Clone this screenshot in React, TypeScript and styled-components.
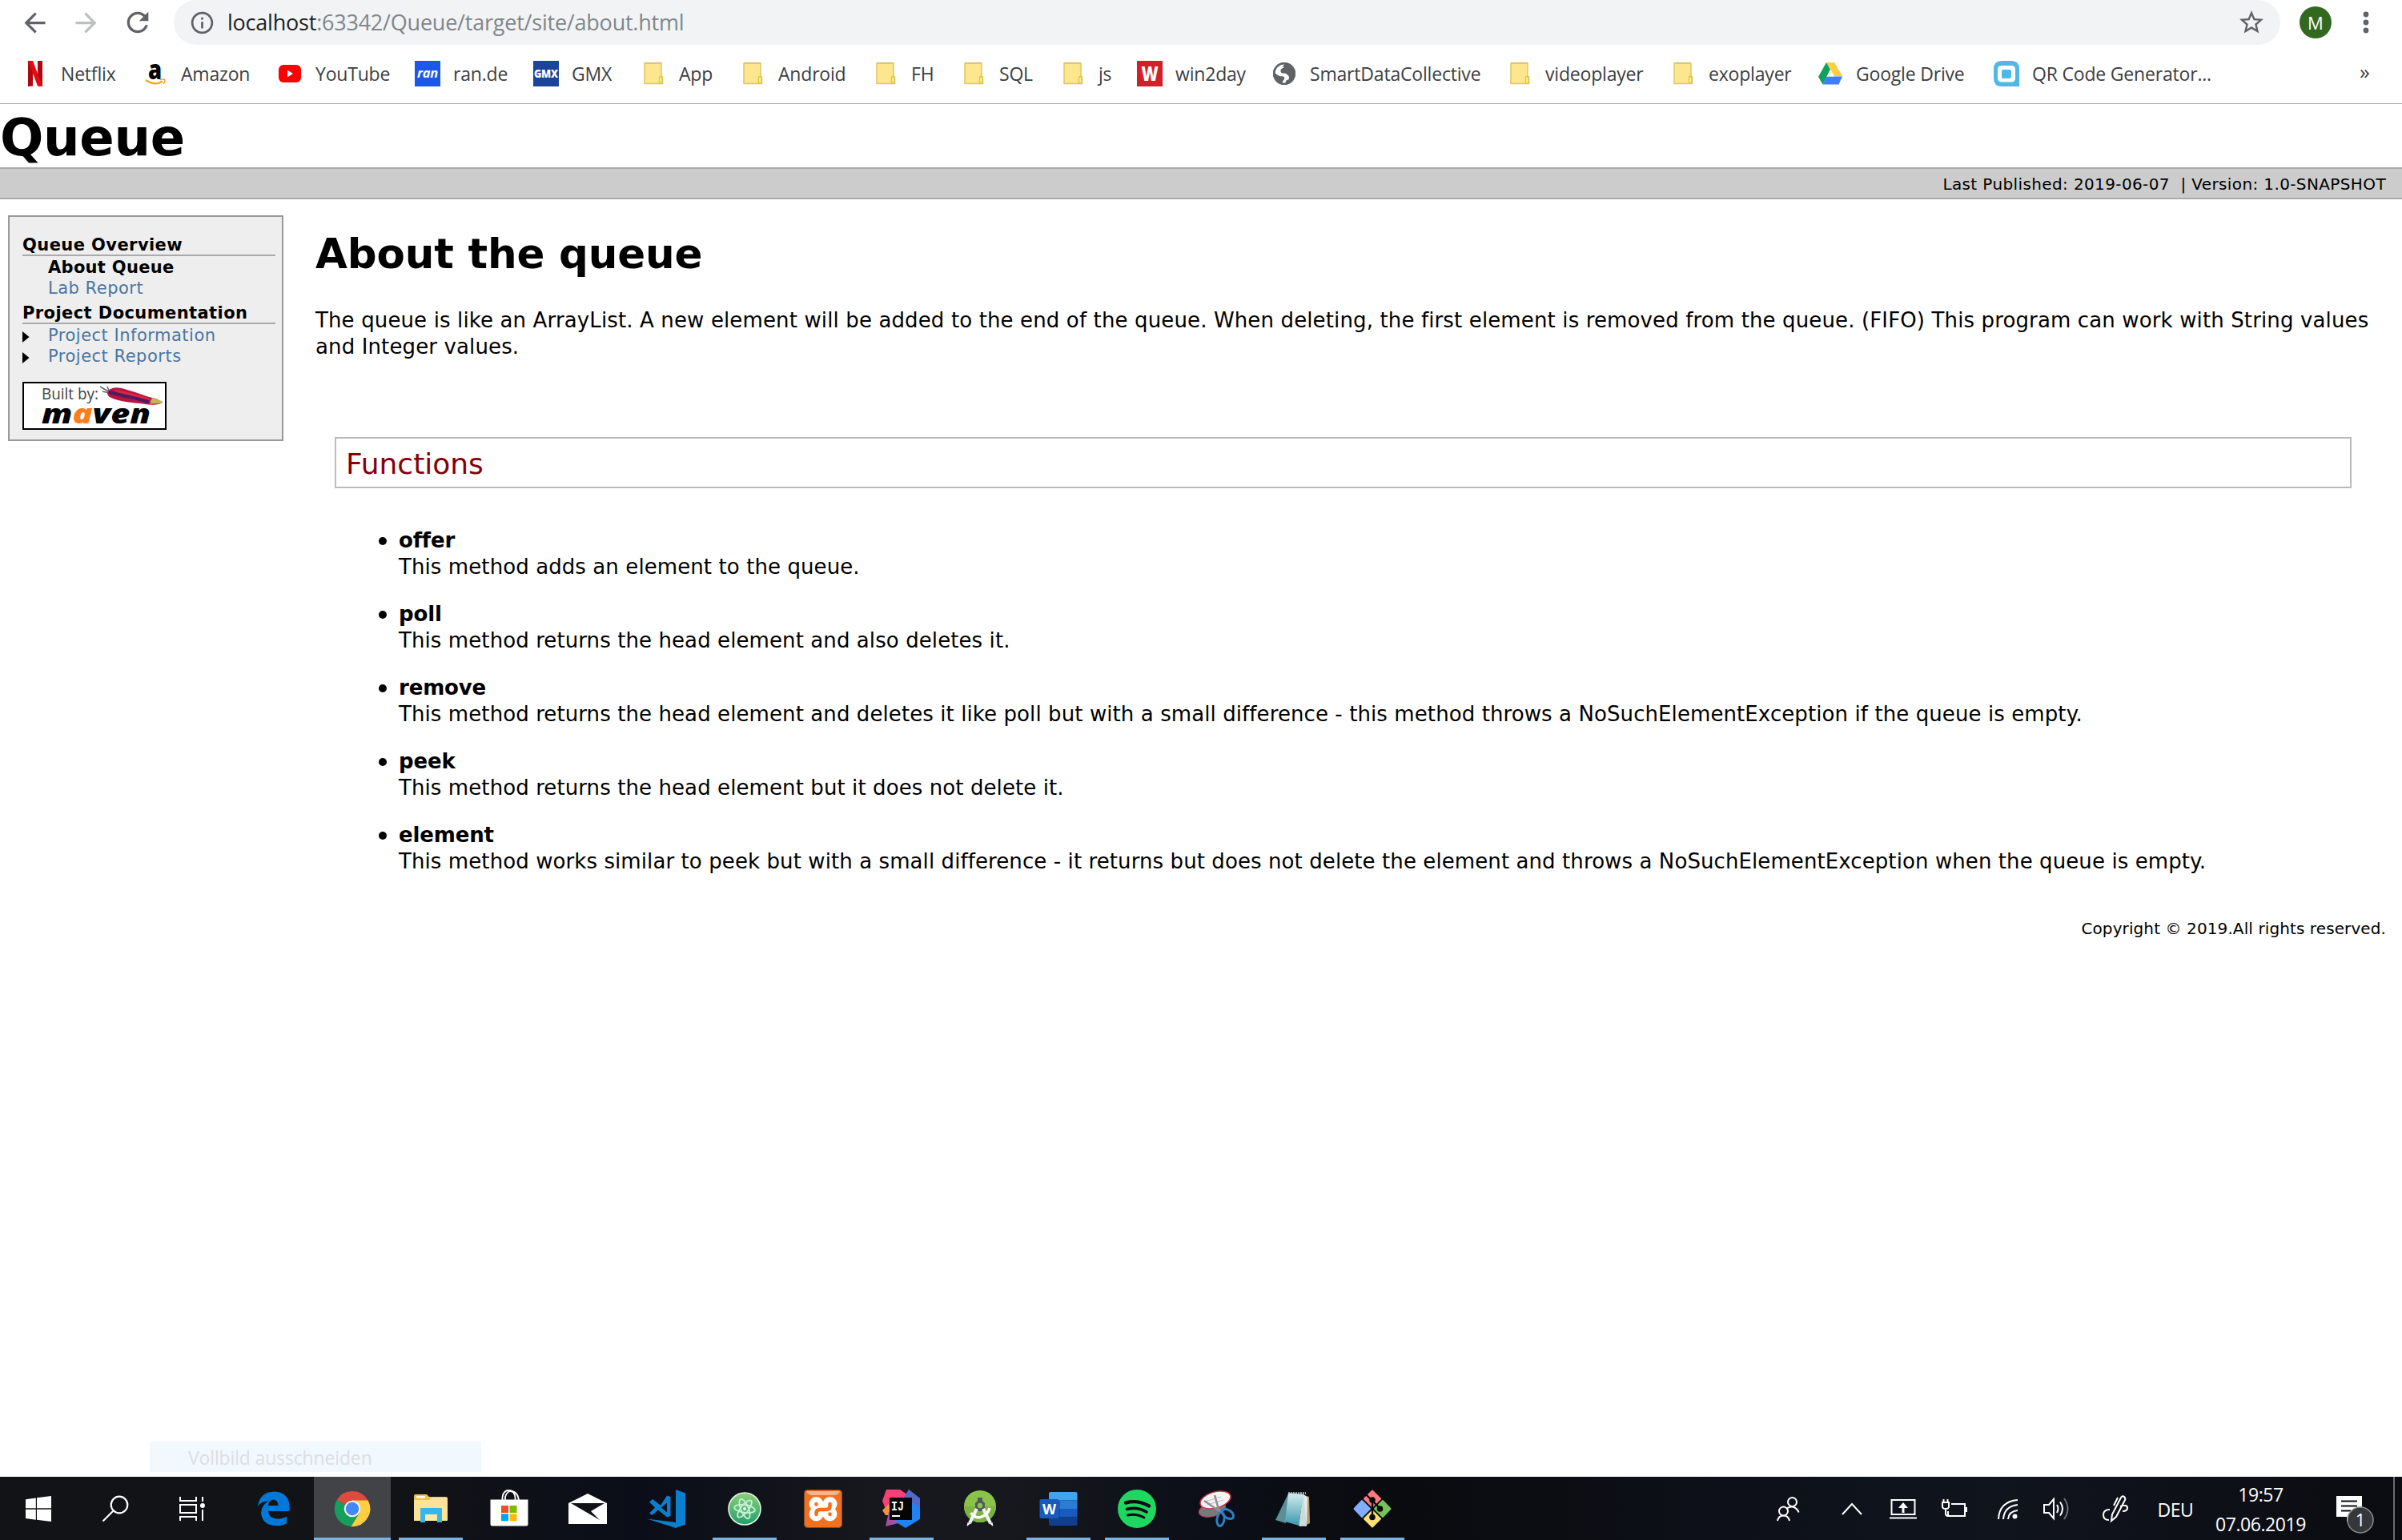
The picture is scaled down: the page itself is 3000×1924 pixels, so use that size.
import React from "react";
import styled, { createGlobalStyle } from "styled-components";
import { MdArrowBack, MdArrowForward, MdRefresh, MdStarBorder, MdInfoOutline } from "react-icons/md";

const Global = createGlobalStyle`
  body { margin: 0; background: #fff; overflow: hidden; }
  *, *::before, *::after { box-sizing: border-box; }
  svg { display: block; flex: none; overflow: visible; }
`;

const uiFont = "'Open Sans', 'Segoe UI', sans-serif";
const siteFont = "'DejaVu Sans', Verdana, sans-serif";

const Screen = styled.div`
  width: 3000px;
  height: 1924px;
  display: flex;
  flex-direction: column;
  background: #fff;
  position: relative;
`;

/* ---------- browser chrome ---------- */

const Toolbar = styled.div`
  height: 56px;
  display: flex;
  align-items: center;
  padding-left: 24px;
  color: #5f6368;
`;

const NavButton = styled.div<{ $disabled?: boolean; $gap: number }>`
  margin-right: ${(p) => p.$gap}px;
  color: ${(p) => (p.$disabled ? "#bdbfc1" : "#5f6368")};
`;

const AddressBar = styled.div`
  width: 2631px;
  height: 56px;
  display: flex;
  align-items: center;
  padding: 0 18px 0 19px;
  border-radius: 28px;
  background: #f1f3f4;
`;

const Url = styled.div`
  flex: 1;
  margin-left: 15px;
  font: 27px/56px ${uiFont};
  letter-spacing: -0.22px;
  color: #80868b;
  white-space: nowrap;
  span { color: #202124; }
`;

const Avatar = styled.div`
  width: 40px;
  height: 40px;
  margin: 0 36px 0 24px;
  border-radius: 50%;
  background: #33691e;
  color: #fff;
  font: 22px/41px ${uiFont};
  text-align: center;
`;

const Bookmarks = styled.div`
  height: 73px;
  display: flex;
  align-items: flex-start;
  padding: 19px 0 0 28px;
`;

const Bookmark = styled.div<{ $w: number }>`
  width: ${(p) => p.$w}px;
  height: 34px;
  display: flex;
  align-items: center;
  gap: 16px;
  font: 23px/32px ${uiFont};
  letter-spacing: -0.19px;
  color: #3c4043;
  white-space: nowrap;
`;

const Overflow = styled.div`
  margin-left: 1px;
  font: 26px/28px ${uiFont};
  color: #3c4043;
`;

const Divider = styled.div`
  height: 1px;
  background: #a8a9ab;
`;

/* ---------- site ---------- */

const Site = styled.div`
  flex: 1;
  min-height: 0;
  display: flex;
  flex-direction: column;
  font-family: ${siteFont};
  color: #000;
`;

const Banner = styled.div`
  height: 79px;
  font-size: 64px;
  font-weight: 700;
  line-height: 84px;
  letter-spacing: -0.3px;
`;

const Breadcrumbs = styled.div`
  height: 40px;
  display: flex;
  justify-content: flex-end;
  padding-right: 20px;
  border-top: 2px solid #aaa;
  border-bottom: 2px solid #aaa;
  background: #ccc;
  font-size: 20px;
  line-height: 38px;
  letter-spacing: 0.38px;
  white-space: pre;
`;

const Columns = styled.div`
  display: flex;
  align-items: flex-start;
  padding: 20px 0 0 10px;
`;

const Sidebar = styled.div`
  width: 344px;
  height: 282px;
  padding: 20px 8px 0 16px;
  border: 2px solid #999;
  background: #eee;
  display: flex;
  flex-direction: column;
`;

const SideHeading = styled.div<{ $top?: number }>`
  margin-top: ${(p) => p.$top || 0}px;
  height: 29px;
  border-bottom: 2px solid #aaa;
  font-size: 21px;
  font-weight: 700;
  line-height: 30px;
  letter-spacing: 0.42px;
`;

const SideItem = styled.div<{ $active?: boolean }>`
  height: 26px;
  padding-top: 2px;
  display: flex;
  align-items: center;
  font-size: 21px;
  line-height: 26px;
  font-weight: ${(p) => (p.$active ? 700 : 400)};
  letter-spacing: ${(p) => (p.$active ? 0.3 : 0.5)}px;
  color: ${(p) => (p.$active ? "#000" : "#4a75a2")};
`;

const Marker = styled.div`
  width: 32px;
  height: 14px;
  margin-top: 4px;
  display: flex;
`;

const MavenBadge = styled.div`
  width: 180px;
  height: 60px;
  margin-top: 20px;
  border: 2px solid #000;
  background: #fff;
`;

const Content = styled.div`
  margin-left: 40px;
  width: 2576px;
`;

const Title = styled.h1`
  margin: 0 0 37px;
  font-size: 51.5px;
  line-height: 60px;
  padding-top: 18px;
  letter-spacing: -0.15px;
`;

const Paragraph = styled.p`
  margin: 0;
  font-size: 26px;
  line-height: 33px;
  letter-spacing: 0.13px;
`;

const SectionTitle = styled.h2`
  margin: 96px 33px 0 24px;
  width: 2519px;
  height: 64px;
  padding-left: 12px;
  border: 2px solid #bbb;
  color: #860008;
  font-size: 36px;
  font-weight: 400;
  line-height: 63px;
`;

const Methods = styled.ul`
  margin: 49px 0 0 79px;
  padding: 0;
  list-style: none;
  display: flex;
  flex-direction: column;
  gap: 26px;
`;

const Method = styled.li`
  display: flex;
  font-size: 26px;
  line-height: 33px;
  letter-spacing: 0.09px;
  white-space: nowrap;
`;

const Bullet = styled.div`
  width: 10px;
  height: 10px;
  margin: 12px 15px 0 0;
  border-radius: 50%;
  background: #000;
`;

const MethodName = styled.div`
  font-weight: 700;
  letter-spacing: -0.15px;
`;

const Footer = styled.div`
  margin-top: 49px;
  padding-right: 20px;
  text-align: right;
  font-size: 20px;
  line-height: 37px;
  letter-spacing: 0.1px;
`;

/* ---------- taskbar ---------- */

const SnipHint = styled.div`
  position: absolute;
  left: 187px;
  top: 1801px;
  width: 414px;
  height: 38px;
  padding-left: 48px;
  background: #f1f8fe;
  color: #dcdee0;
  font: 23px/40px ${uiFont};
  letter-spacing: -0.15px;
`;

const Taskbar = styled.div`
  height: 79px;
  display: flex;
  color: #fff;
  background: linear-gradient(90deg, #111317 0, #111317 500px, #0b0e18 800px, #17181d 1100px, #17181d 1260px, #0c0f18 1500px, #0a0b0f 1750px, #0e121b 2300px, #10141d 2500px, #0b0c11 3000px);
`;

const TaskButton = styled.div<{ $active?: boolean; $system?: boolean }>`
  flex: none;
  width: ${(p) => (p.$system ? 96 : 98)}px;
  height: 79px;
  display: flex;
  flex-direction: column;
  align-items: center;
  justify-content: space-between;
  padding-top: 16px;
  background: ${(p) => (p.$active ? "linear-gradient(#414347, #414347) center / 96px 100% no-repeat" : "none")};
`;

const Pinned = styled.div`
  display: flex;
  margin-left: 5px;
`;

const Underline = styled.div<{ $kind?: "open" | "active" }>`
  width: ${(p) => (p.$kind === "active" ? 96 : 80)}px;
  height: 3px;
  background: ${(p) => (p.$kind ? "#79b4e6" : "transparent")};
`;

const Tray = styled.div`
  flex: none;
  display: flex;
  align-items: center;
  margin-left: 430px;
  height: 79px;
`;

const TrayIcon = styled.div<{ $w: number }>`
  width: ${(p) => p.$w}px;
  display: flex;
  justify-content: center;
`;

const TrayText = styled.div<{ $w: number }>`
  width: ${(p) => p.$w}px;
  padding-top: 3px;
  font: 23px/37px ${uiFont};
  letter-spacing: -0.45px;
  text-align: center;
  white-space: nowrap;
`;

const ShowDesktop = styled.div`
  width: 2px;
  height: 79px;
  background: #6a6c70;
`;

/* ---------- bookmark icons ---------- */

const I = ({ children }: { children: React.ReactNode }) => (
  <svg width="32" height="32" viewBox="0 0 32 32">{children}</svg>
);

const Folder = () => (
  <I>
    <path d="M5 3h21v17h1.500v8.500H5z" fill="#fee68f" stroke="#dcc866" strokeWidth="1.500" />
    <path d="M23.500 28V21q0-1.500 1.700-1.500t1.700 1.500v7z" fill="#fff0a0" stroke="#e0c440" strokeWidth="1.400" />
    <path d="M5 2.800h21" stroke="#d8c67a" strokeWidth="2" />
  </I>
);

const Netflix = () => (
  <I>
    <path d="M7 0h6v31.500l-6 .5zM19 0h6v32l-6-.5z" fill="#b00710" />
    <path d="M7 0h6l12 32-6-.5z" fill="#e50914" />
  </I>
);

const Amazon = () => (
  <I>
    <text x="15.500" y="23" fontFamily="Open Sans" fontWeight="800" fontSize="33" textAnchor="middle" fill="#000" textLength="17" lengthAdjust="spacingAndGlyphs">a</text>
    <path d="M4 24q12 8 21 1.500" fill="none" stroke="#f4a51c" strokeWidth="2.200" />
    <path d="M22 23.500q5-1 6 .5-.3 3-2 5" fill="none" stroke="#f4a51c" strokeWidth="1.500" />
  </I>
);

const YouTube = () => (
  <I>
    <rect x="2" y="5" width="28" height="22" rx="6" fill="#f00" />
    <path d="M13 11.500l7 4.500-7 4.500z" fill="#fff" />
  </I>
);

const Ran = () => (
  <I>
    <rect width="32" height="32" fill="#1b57e8" />
    <text x="16" y="20.500" fontFamily="Open Sans" fontStyle="italic" fontWeight="700" fontSize="16" textAnchor="middle" fill="#fff" textLength="26" lengthAdjust="spacingAndGlyphs">ran</text>
  </I>
);

const Gmx = () => (
  <I>
    <rect width="32" height="32" fill="#1c449b" />
    <text x="16" y="20.500" fontFamily="Open Sans" fontWeight="800" fontSize="13.500" textAnchor="middle" fill="#fff" textLength="30" lengthAdjust="spacingAndGlyphs">GMX</text>
  </I>
);

const Win2day = () => (
  <I>
    <rect width="32" height="32" fill="#d41f2a" />
    <text x="16" y="25" fontFamily="Open Sans" fontWeight="800" fontSize="25" textAnchor="middle" fill="#fff" textLength="21" lengthAdjust="spacingAndGlyphs">W</text>
  </I>
);

const Globe = () => (
  <I>
    <circle cx="16" cy="16" r="14" fill="#5f6368" />
    <path d="M17 3.500q-4 3-1.500 5-4.500 1-4 4.500 0 3 5 2.500 4 1 5.500 4.500.5 4-3 4l-2 4q-2 .2-3.500 0 0-3 2.500-5 1.500-3-3-4-3 1-8.500-3.500Q5 5 17 3.500z" fill="#fff" />
    <circle cx="16" cy="16" r="12.800" fill="none" stroke="#5f6368" strokeWidth="2.400" />
  </I>
);

const Drive = () => (
  <I>
    <path d="M11 2h10l10 17H21z" fill="#ffcf3f" />
    <path d="M11 2l5 9L6.500 29.500 1 20z" fill="#11a15f" />
    <path d="M11.500 19.500H31l-4.500 10H6.500z" fill="#3f7ef5" />
    <path d="M16 11l4.700 8.500h-9.200z" fill="#fff" />
  </I>
);

const QrCode = () => (
  <I>
    <path d="M10 0h12q10 0 10 10v22H10Q0 32 0 22V10Q0 0 10 0z" fill="#4fb8e7" />
    <rect x="5" y="6" width="22" height="20.500" rx="4.500" fill="#fff" />
    <rect x="10" y="11" width="12" height="11" rx="2" fill="#4fb8e7" />
  </I>
);

const bookmarks: { name: string; w: number; Icon: React.FC }[] = [
  { name: "Netflix", w: 150, Icon: Netflix },
  { name: "Amazon", w: 168, Icon: Amazon },
  { name: "YouTube", w: 172, Icon: YouTube },
  { name: "ran.de", w: 148, Icon: Ran },
  { name: "GMX", w: 134, Icon: Gmx },
  { name: "App", w: 124, Icon: Folder },
  { name: "Android", w: 166, Icon: Folder },
  { name: "FH", w: 110, Icon: Folder },
  { name: "SQL", w: 124, Icon: Folder },
  { name: "js", w: 96, Icon: Folder },
  { name: "win2day", w: 168, Icon: Win2day },
  { name: "SmartDataCollective", w: 294, Icon: Globe },
  { name: "videoplayer", w: 204, Icon: Folder },
  { name: "exoplayer", w: 184, Icon: Folder },
  { name: "Google Drive", w: 220, Icon: Drive },
  { name: "QR Code Generator...", w: 456, Icon: QrCode },
];

/* ---------- site icons ---------- */

const MavenLogo = () => (
  <svg width="176" height="56" viewBox="0 0 176 56">
    <text x="22" y="20" fontFamily="Open Sans" fontSize="20" fill="#444" textLength="71" lengthAdjust="spacingAndGlyphs">Built by:</text>
    <text x="22" y="50" fontFamily="Open Sans" fontWeight="800" fontStyle="italic" fontSize="34" fill="#000" textLength="136" lengthAdjust="spacingAndGlyphs">
      m<tspan fill="#ff7d1a">a</tspan>ven
    </text>
    <path d="M95 4l12 7M98 10l9 2M104 4l3 7" stroke="#666" strokeWidth="1.600" />
    <path d="M104 12q3-9 18-6 18 5 34 11 12 2 17 7-8 5-28 1-26-2-36-7-5-2-5-6z" fill="#b81440" />
    <path d="M112 7q30 6 50 14l-8 3q-30-3-42-17z" fill="#d8273c" />
    <path d="M106 11q22 5 50 12" stroke="#4d1a63" strokeWidth="4" fill="none" />
    <path d="M160 18l13 4.500-2 2.500-14 .5z" fill="#c6b455" />
  </svg>
);

/* ---------- taskbar icons ---------- */

const T = ({ children }: { children: React.ReactNode }) => (
  <svg width="48" height="48" viewBox="0 0 48 48">{children}</svg>
);

const WindowsIcon = () => (
  <T>
    <path d="M8 12.300l12.800-1.800V23.300H8zM22 10.300L40 8v15.300H22zM8 24.700h12.800v13L8 36zM22 24.700h18V40l-18-2.300z" fill="#fff" />
  </T>
);
const SearchIcon = () => (
  <T>
    <g fill="none" stroke="#fff" strokeWidth="2.200">
      <circle cx="29" cy="19" r="10.300" />
      <path d="M21.500 26.500L8.500 39.500" />
    </g>
  </T>
);
const TaskViewIcon = () => (
  <T>
    <g fill="none" stroke="#fff" strokeWidth="2">
      <path d="M9 9v5h20V9M9 39v-5h20v5M9 19h20v10H9zM37 9v6M37 25v14" />
    </g>
    <circle cx="37" cy="20" r="3" fill="#fff" />
  </T>
);
const EdgeIcon = () => (
  <T>
    <path d="M4 21Q6.500 3 24.500 2.500 42 3 43.500 20v7H17q.5 9 11.500 9.500 7 0 11.500-2.800v8.500Q34.500 45.300 27 45.300 9.500 44.500 8 29q.5-10 10-15Q8 14.500 4 21zM17 20h12.500q-.5-7.500-6.200-7.500Q17.500 13.500 17 20z" fill="#0078d7" />
  </T>
);
const ChromeIcon = () => (
  <T>
    <path d="M24 24L4.700 13A22.300 22.300 0 0 1 43.500 13.500z" fill="#dd4b3e" />
    <path d="M24 24L4.700 13A22.300 22.300 0 0 0 22.500 46.200L32 30z" fill="#169f5c" />
    <path d="M24 13.500H43.700A22.300 22.300 0 0 1 22.500 46.200L33 29z" fill="#ffce42" />
    <circle cx="24" cy="24" r="10.300" fill="#f2f2f2" />
    <circle cx="24" cy="24" r="8.200" fill="#4587f3" />
  </T>
);
const ExplorerIcon = () => (
  <T>
    <path d="M3 8q0-2 2-2h14l3 3h21q2 0 2 2v28H3z" fill="#f5c143" />
    <rect x="6" y="8" width="11" height="2.500" fill="#fff" />
    <path d="M3 13h19l3-3h18q2 0 2 2v25q0 2-2 2H5q-2 0-2-2z" fill="#fde398" />
    <path d="M11 24q0-1 1-1h25q1 0 1 1v17h-6V31H17v10h-6z" fill="#3db4e6" />
    <path d="M17 31h14v8H17z" fill="#fbe9a8" />
  </T>
);
const StoreIcon = () => (
  <T>
    <g fill="none" stroke="#fff" strokeWidth="1.800">
      <path d="M15.500 14V10q1-9 8-9t8 9v4" />
      <path d="M19 14V9q2-6 6-7 10 0 11 12" />
    </g>
    <path d="M.5 12.500h47V43q0 2.500-2.500 2.500H3Q.5 45.500.5 43z" fill="#fff" />
    <path d="M14 20h9v9h-9z" fill="#f25022" /><path d="M24.500 20h9v9h-9z" fill="#7fba00" />
    <path d="M14 30.300h9v9h-9z" fill="#00a4ef" /><path d="M24.500 30.300h9v9h-9z" fill="#ffb900" />
  </T>
);
const MailIcon = () => (
  <T>
    <path d="M0 17L24 5l24 12v26H0z" fill="#fff" />
    <path d="M3 17h42L28 27l11 11z" fill="#101218" />
  </T>
);
const CodeIcon = () => (
  <T>
    <path d="M36 0l12 4.500v39L36 48 0 36.500 36 41z" fill="#0a7fd0" />
    <path d="M3 15.500L7 12l10 7.700L25 7.500l4.500 1.500v24L25 34.500 14 25.500 6.500 32 3 29.500 10 22.500zM18 22.500l7 6v-12z" fill="#0a7fd0" fillRule="evenodd" />
  </T>
);
const AtomIcon = () => (
  <T>
    <defs><linearGradient id="atomFill" x2="0" y2="1"><stop offset="0" stopColor="#8fcf7a" /><stop offset="1" stopColor="#1fa06a" /></linearGradient></defs>
    <circle cx="24" cy="24" r="20" fill="url(#atomFill)" stroke="#e8f5ea" strokeWidth="1.600" />
    <g fill="none" stroke="#c9f0d8" strokeWidth="1.800">
      <ellipse cx="24" cy="24" rx="13" ry="4.800" transform="rotate(8 24 24)" />
      <ellipse cx="24" cy="24" rx="13" ry="4.800" transform="rotate(68 24 24)" />
      <ellipse cx="24" cy="24" rx="13" ry="4.800" transform="rotate(128 24 24)" />
    </g>
    <circle cx="24" cy="24" r="2" fill="#e9fff2" />
  </T>
);
const XamppIcon = () => (
  <T>
    <rect x=".5" y=".5" width="47" height="47" rx="4" fill="#f3701f" stroke="#7d4a2b" />
    <path d="M3 2h42q-2 5-8 5H11Q5 7 3 2z" fill="#fbb684" />
    <g fill="#fff">
      <circle cx="15.500" cy="18" r="9" /><circle cx="32.500" cy="18" r="9" />
      <circle cx="15.500" cy="30.500" r="9" /><circle cx="32.500" cy="30.500" r="9" />
      <path d="M14 16h20v17H14z" />
    </g>
    <g fill="none" stroke="#f3701f" strokeWidth="4.500" strokeLinecap="round" strokeLinejoin="round">
      <path d="M15.500 31v-2q0-4 5-4h7q5 0 5-4v-3" />
      <path d="M15.500 18v.5M32.500 31v-.5" />
    </g>
  </T>
);
const IntelliJIcon = () => (
  <T>
    <path d="M5 0h17l12 8-14 22H6L0 14z" fill="#fc3f76" />
    <path d="M0 26l8-8 6 14-10 0z" fill="#f6923c" />
    <path d="M8 28h16l-4 14L4 46z" fill="#a34ea0" />
    <path d="M33 0l14 11v26L29 48 16 40l10-28z" fill="#1f83f6" />
    <path d="M33 0l14 11v12L27 10z" fill="#5468c8" />
    <rect x="9" y="10" width="28" height="28" fill="#050505" />
    <text x="11" y="25.500" fontFamily="Liberation Mono" fontWeight="700" fontSize="17" fill="#fff" textLength="16" lengthAdjust="spacingAndGlyphs">IJ</text>
    <rect x="12" y="32" width="10" height="2" fill="#fff" />
  </T>
);
const AndroidStudioIcon = () => (
  <T>
    <circle cx="24" cy="21" r="20" fill="#8bc34a" />
    <path d="M4 21a20 20 0 0 0 40 0z" fill="#7cb342" />
    <path d="M21 10h6v4l3 3v7l-3 3h-6l-3-3v-7l3-3z" fill="#50595e" />
    <circle cx="24" cy="20" r="3.200" fill="#8bc34a" />
    <path d="M20 24l-9 18M28 24l9 18" stroke="#f1f1f1" strokeWidth="4" fill="none" />
    <path d="M12.500 29q6 8 13.500 5 8-3 10-11" stroke="#fff" strokeWidth="3.500" fill="none" />
    <path d="M7.500 46l1-5 3.500 1.500zM40.500 46l-1-5-3.500 1.500z" fill="#fff" />
  </T>
);
const WordIcon = () => (
  <T>
    <path d="M12 5q0-2 2-2h31.500q2 0 2 2v8.500H12z" fill="#41a5ee" />
    <path d="M12 13.500h35.500V24H12z" fill="#2b7cd3" />
    <path d="M12 24h35.500v10.500H12z" fill="#185abd" />
    <path d="M12 34.500h35.500V43q0 2-2 2H14q-2 0-2-2z" fill="#103f91" />
    <path d="M12 14h14v22H12z" fill="#103f91" opacity=".5" />
    <rect x=".5" y="12" width="24" height="24" rx="2" fill="#185abd" />
    <text x="12.500" y="30.500" fontFamily="Open Sans" fontWeight="700" fontSize="18" fill="#fff" textAnchor="middle" textLength="17" lengthAdjust="spacingAndGlyphs">W</text>
  </T>
);
const SpotifyIcon = () => (
  <T>
    <circle cx="24" cy="24" r="24" fill="#1ed760" />
    <g fill="none" stroke="#0b0d14" strokeLinecap="round">
      <path d="M10 16.500q15-4 29 4" strokeWidth="4.400" />
      <path d="M11.500 24.500q13-3.500 24.500 3.500" strokeWidth="3.600" />
      <path d="M12.500 32q11-2.500 20.500 3" strokeWidth="3" />
    </g>
  </T>
);
const SnipIcon = () => (
  <T>
    <ellipse cx="20" cy="25" rx="17" ry="8.500" transform="rotate(-14 20 25)" fill="#77797d" stroke="#b54652" strokeWidth="1" />
    <ellipse cx="24" cy="13" rx="19.500" ry="10" transform="rotate(-16 24 13)" fill="#f4f4f5" stroke="#cf3546" strokeWidth="1.500" />
    <path d="M11 15l20-6M14 19l20-6" stroke="#b9b9bd" strokeWidth="1" />
    <path d="M23 7l6 21M10 14l22 15" stroke="#8c8f94" strokeWidth="2.600" />
    <g fill="none" stroke="#2c7fc4" strokeWidth="3">
      <ellipse cx="30.500" cy="37" rx="4.500" ry="8.500" transform="rotate(8 30.500 37)" />
      <ellipse cx="39.500" cy="30.500" rx="4.800" ry="8" transform="rotate(-55 39.500 30.500)" />
    </g>
  </T>
);
const NotepadIcon = () => (
  <T>
    <defs><linearGradient id="noteFill" x2="0" y2="1"><stop offset="0" stopColor="#d5eef0" /><stop offset="1" stopColor="#3b98ac" /></linearGradient></defs>
    <path d="M37 7l6 2 1 33-6 3z" fill="#b59b6a" />
    <path d="M35 5l6 5-1 35-9 1z" fill="#e4ebea" />
    <path d="M17 5L1 38l13 4z" fill="#5a8f98" />
    <path d="M17 4l19 2-6 39-17-5z" fill="url(#noteFill)" />
    <path d="M30 45l10 1L36 6z" fill="#c9dcdb" />
    <path d="M17 4.500h22" stroke="#b9bdc0" strokeWidth="2.500" strokeDasharray="2 1" />
  </T>
);
const GitIcon = () => (
  <T>
    <g strokeLinejoin="round" strokeWidth="2">
      <path d="M24 1.500L34 11.500 24 21.500 14 11.500z" fill="#ff7a7e" stroke="#ff7a7e" />
      <path d="M11 14L21 24 11 34 1.500 24z" fill="#82aeff" stroke="#82aeff" />
      <path d="M37 14L46.500 24 37 34 27 24z" fill="#78c257" stroke="#78c257" />
      <path d="M24 26.500L34 36.500 24 46.500 14 36.500z" fill="#ffe173" stroke="#ffe173" />
    </g>
    <g stroke="#0a0b0f" strokeWidth="2.400" fill="#0a0b0f">
      <path d="M16 6l8 8 9 9M24 14v20" fill="none" />
      <circle cx="24" cy="13" r="2.600" /><circle cx="33.500" cy="24" r="2.600" /><circle cx="24" cy="34.500" r="2.600" />
    </g>
  </T>
);

type App = { key: string; Icon: React.FC; kind?: "open" | "active" };

const systemButtons: App[] = [
  { key: "start", Icon: WindowsIcon },
  { key: "search", Icon: SearchIcon },
  { key: "tasks", Icon: TaskViewIcon },
];

const apps: App[] = [
  { key: "edge", Icon: EdgeIcon },
  { key: "chrome", Icon: ChromeIcon, kind: "active" },
  { key: "explorer", Icon: ExplorerIcon, kind: "open" },
  { key: "store", Icon: StoreIcon },
  { key: "mail", Icon: MailIcon },
  { key: "code", Icon: CodeIcon },
  { key: "atom", Icon: AtomIcon, kind: "open" },
  { key: "xampp", Icon: XamppIcon },
  { key: "intellij", Icon: IntelliJIcon, kind: "open" },
  { key: "studio", Icon: AndroidStudioIcon },
  { key: "word", Icon: WordIcon, kind: "open" },
  { key: "spotify", Icon: SpotifyIcon, kind: "open" },
  { key: "snip", Icon: SnipIcon },
  { key: "notepad", Icon: NotepadIcon, kind: "open" },
  { key: "git", Icon: GitIcon, kind: "open" },
];

const Stroke = ({ w = 34, h = 34, children }: { w?: number; h?: number; children: React.ReactNode }) => (
  <svg width={w} height={h} viewBox={`0 0 ${w} ${h}`} fill="none" stroke="#fff" strokeWidth="2">{children}</svg>
);

const methods = [
  ["offer", "This method adds an element to the queue."],
  ["poll", "This method returns the head element and also deletes it."],
  ["remove", "This method returns the head element and deletes it like poll but with a small difference - this method throws a NoSuchElementException if the queue is empty."],
  ["peek", "This method returns the head element but it does not delete it."],
  ["element", "This method works similar to peek but with a small difference - it returns but does not delete the element and throws a NoSuchElementException when the queue is empty."],
];

const Arrow = () => (
  <Marker>
    <svg width="9" height="14" viewBox="0 0 9 14"><path d="M0 0l8.500 7L0 14z" fill="#000" /></svg>
  </Marker>
);

export default function App() {
  return (
    <Screen>
      <Global />
      <Toolbar>
        <NavButton $gap={25}><MdArrowBack size={39} /></NavButton>
        <NavButton $disabled $gap={25}><MdArrowForward size={39} /></NavButton>
        <NavButton $gap={25}><MdRefresh size={40} /></NavButton>
        <AddressBar>
          <MdInfoOutline size={33} />
          <Url><span>localhost</span>:63342/Queue/target/site/about.html</Url>
          <MdStarBorder size={36} />
        </AddressBar>
        <Avatar>M</Avatar>
        <svg width="14" height="30" viewBox="0 0 14 30" fill="#5f6368">
          <circle cx="7" cy="5" r="3.400" /><circle cx="7" cy="15" r="3.400" /><circle cx="7" cy="25" r="3.400" />
        </svg>
      </Toolbar>
      <Bookmarks>
        {bookmarks.map(({ name, w, Icon }) => (
          <Bookmark key={name} $w={w}><Icon />{name}</Bookmark>
        ))}
        <Overflow>»</Overflow>
      </Bookmarks>
      <Divider />
      <Site>
        <Banner>Queue</Banner>
        <Breadcrumbs>{"Last Published: 2019-06-07  | Version: 1.0-SNAPSHOT"}</Breadcrumbs>
        <Columns>
          <Sidebar>
            <SideHeading>Queue Overview</SideHeading>
            <SideItem $active><Marker />About Queue</SideItem>
            <SideItem><Marker />Lab Report</SideItem>
            <SideHeading $top={4}>Project Documentation</SideHeading>
            <SideItem><Arrow />Project Information</SideItem>
            <SideItem><Arrow />Project Reports</SideItem>
            <MavenBadge><MavenLogo /></MavenBadge>
          </Sidebar>
          <Content>
            <Title>About the queue</Title>
            <Paragraph>
              The queue is like an ArrayList. A new element will be added to the end of the queue. When deleting, the first element is removed from the queue. (FIFO) This program can work with String values and Integer values.
            </Paragraph>
            <SectionTitle>Functions</SectionTitle>
            <Methods>
              {methods.map(([name, text]) => (
                <Method key={name}>
                  <Bullet />
                  <div>
                    <MethodName>{name}</MethodName>
                    {text}
                  </div>
                </Method>
              ))}
            </Methods>
          </Content>
        </Columns>
        <Footer>Copyright © 2019.All rights reserved.</Footer>
      </Site>
      <SnipHint>Vollbild ausschneiden</SnipHint>
      <Taskbar>
        {systemButtons.map(({ key, Icon }) => (
          <TaskButton key={key} $system><Icon /></TaskButton>
        ))}
        <Pinned>
          {apps.map(({ key, Icon, kind }) => (
            <TaskButton key={key} $active={kind === "active"}><Icon /><Underline $kind={kind} /></TaskButton>
          ))}
        </Pinned>
        <Tray>
          <TrayIcon $w={80}>
            <Stroke w={30}>
              <circle cx="20.500" cy="8.500" r="5.500" /><path d="M13 17q4-3 8-2.500 6 2 7.500 7" />
              <circle cx="9.500" cy="20" r="5.500" /><path d="M2 32q1.500-6.500 7.500-6.500T17 32" />
            </Stroke>
          </TrayIcon>
          <TrayIcon $w={80}><Stroke w={28} h={18}><path d="M2 16L14 3l12 13" /></Stroke></TrayIcon>
          <TrayIcon $w={48}><Stroke h={26}>
            <path d="M2.500 2h29v18h-29zM0 24.500h34" /><path d="M17 18V9" strokeWidth="3" /><path d="M11 12l6-7 6 7z" fill="#fff" stroke="none" />
          </Stroke></TrayIcon>
          <TrayIcon $w={80}><Stroke h={26}>
            <path d="M13 7h17v15H9V16M32 11v6" /><path d="M2 5v5q0 3 4 3t4-3V5zM3.500 1v4M8.500 1v4M6 13v6q0 3 3 3" />
          </Stroke></TrayIcon>
          <TrayIcon $w={53}><Stroke w={26} h={28}>
            <path d="M1 27Q2 5 25 3M7 27Q8 11 25 9M13 27q1-10 12-11" /><circle cx="21.500" cy="23.500" r="3" fill="#fff" stroke="none" />
          </Stroke></TrayIcon>
          <TrayIcon $w={70}><Stroke w={36} h={30}>
            <path d="M2 10h6l6-7v24l-6-7H2z" /><path d="M18 10q3 5 0 10M22 6.500q6 8.500 0 17" /><path d="M27 2q9 13 0 26" stroke="#6b6e74" />
          </Stroke></TrayIcon>
          <TrayIcon $w={75}><Stroke w={34} h={36}>
            <path d="M10 19q-8 0-8 6.500Q2 32 9 32M12 33l1-8L24 4q2-3 4-1t1 4L18 28zM20 4l-5 10M23 15q9-3 9 2 0 4-6 4" />
          </Stroke></TrayIcon>
          <TrayText $w={76}>DEU</TrayText>
          <TrayText $w={137}>19:57<br />07.06.2019</TrayText>
          <TrayIcon $w={97}>
            <svg width="48" height="60" viewBox="0 0 48 60">
              <path d="M1 14h32v26H20l-6 6v-6H1z" fill="#fff" />
              <path d="M7 20.500h20M7 26.500h20M7 32.500h12" stroke="#0d0f14" strokeWidth="2" />
              <circle cx="31" cy="44" r="16" fill="#35373b" stroke="#8a8c8f" strokeWidth="1.500" />
              <text x="31" y="52" fontFamily="Open Sans" fontSize="22" fill="#fff" textAnchor="middle">1</text>
            </svg>
          </TrayIcon>
          <ShowDesktop />
        </Tray>
      </Taskbar>
    </Screen>
  );
}
